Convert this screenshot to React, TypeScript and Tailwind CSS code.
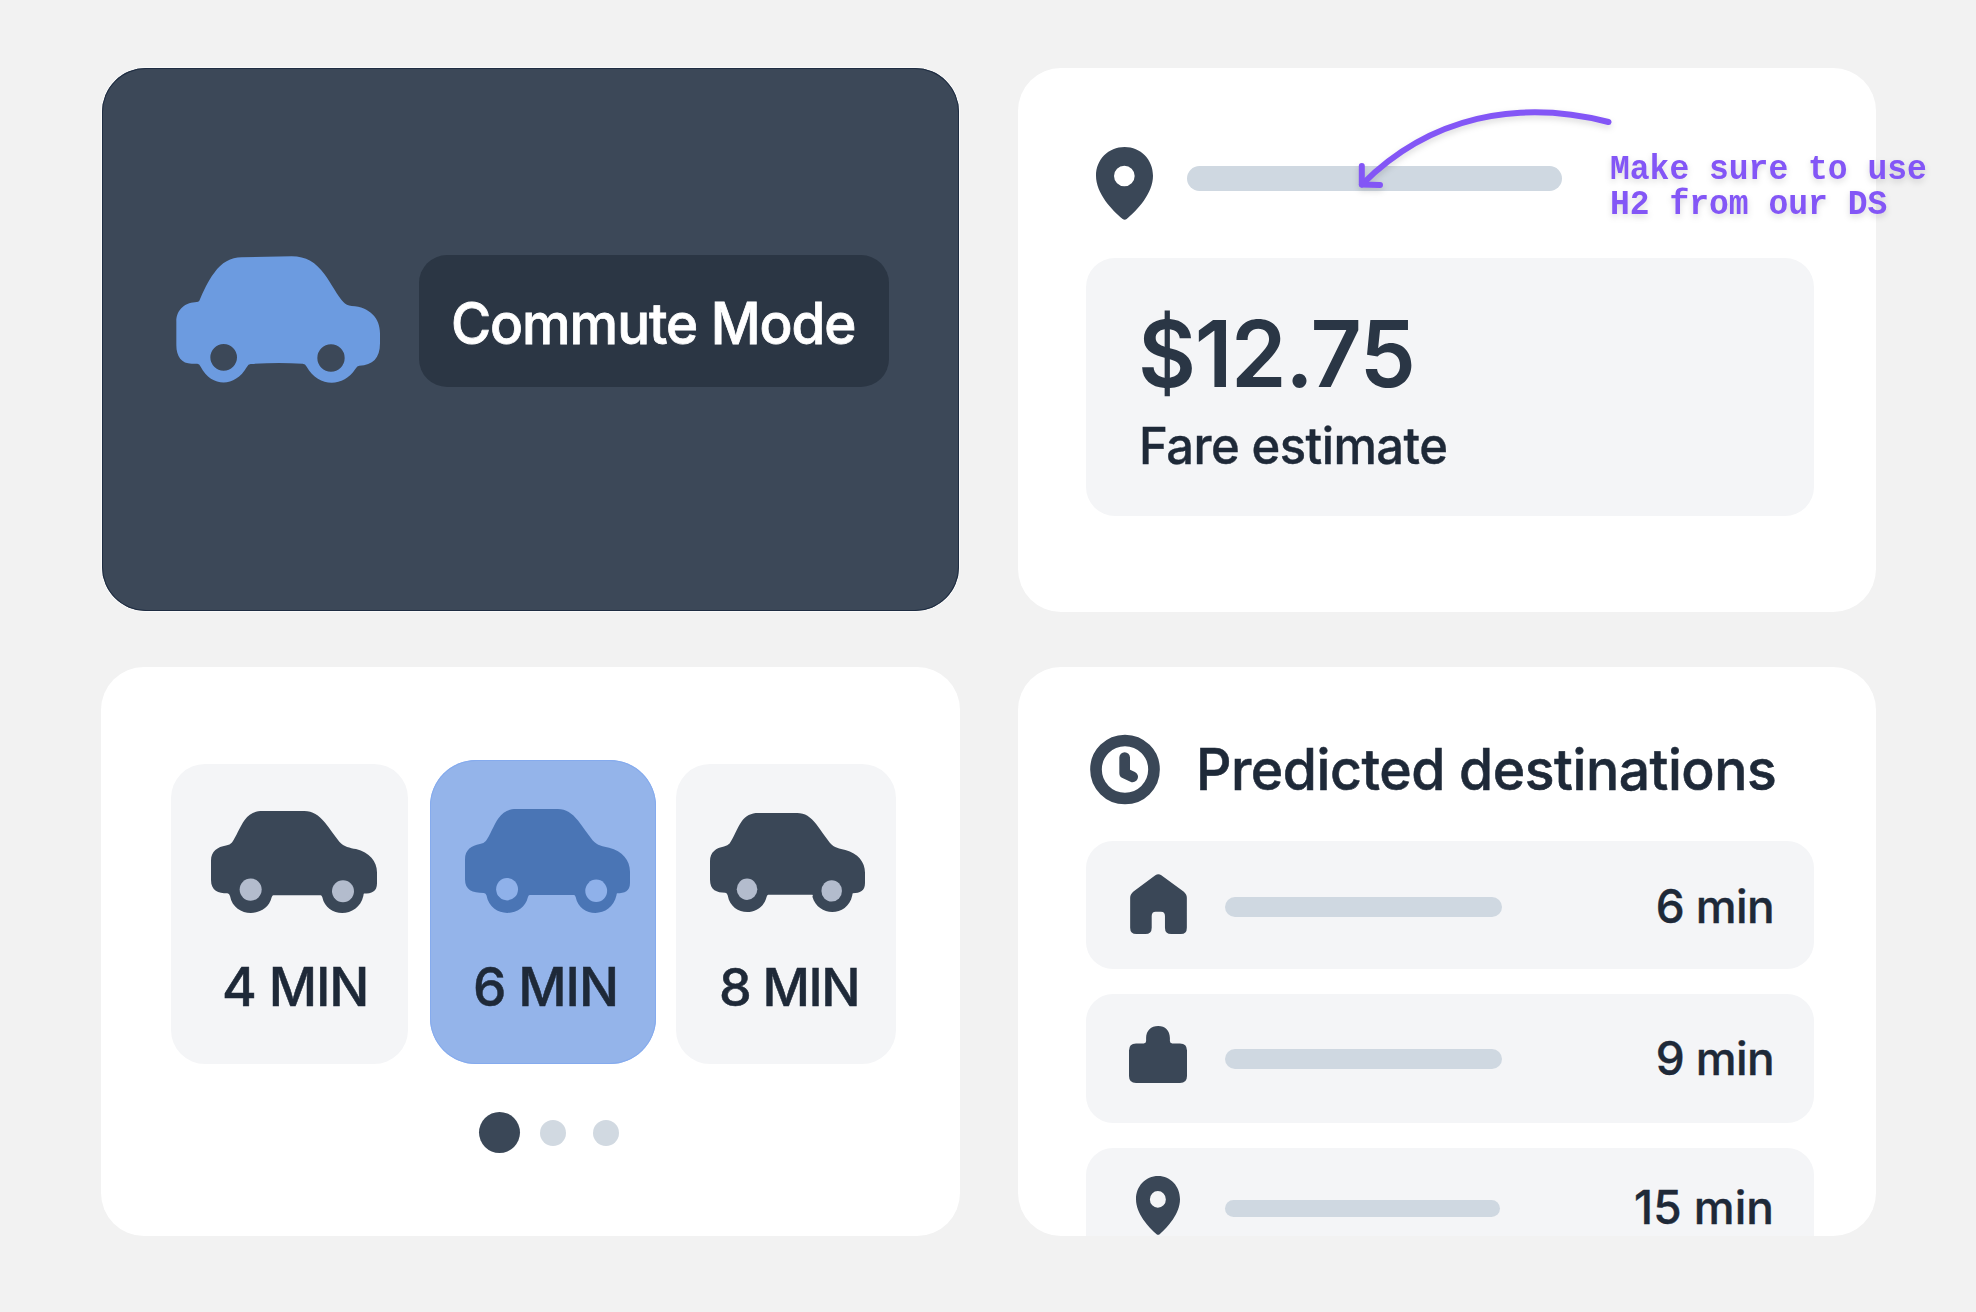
import type { ReactNode } from "react";

type CarProps = { className: string; body: string; wheel: string; left?: number; right?: number };

function Car({ className, body, wheel, left = 482, right = 758 }: CarProps) {
  return (
    <svg viewBox="363 484 498 305" preserveAspectRatio="none" className={className}>
      <path
        className={body}
        d={`M426 578C438 562 450 530 464 511C478 492 495 484 518 484L643 484C668 484 686 496 704 518C720 538 735 560 748 576C762 592 780 594 798 598C838 608 861 635 861 668L861 700C861 725 845 731 822 731Q821 731 820 738C805 805 710 805 ${right - 61} 742Q695 736 692 736L${left + 68} 736Q${left + 65} 736 ${left + 63} 742C${left + 48} 805 ${left - 50} 805 ${left - 62} 738Q${left - 64} 730 ${left - 70} 730C385 730 363 722 363 690L363 632C363 604 383 591 408 587Q420 585 426 578Z`}
      />
      <circle className={wheel} cx={left} cy="719" r="33" />
      <circle className={wheel} cx={right + 1} cy="724" r="33" />
    </svg>
  );
}

function HeroCar() {
  return (
    <svg viewBox="288 618 612 384" className="mt-px h-32 w-[204px] shrink-0">
      <path
        fillRule="evenodd"
        className="fill-[#6c9be0]"
        d="M358 752C370 724 384 692 403 668C425 638 452 622 485 622L635 619C678 619 708 638 733 672C755 702 773 738 790 756Q799 766 815 768C870 771 900 805 900 850L900 880C900 925 878 946 838 947Q832 947 826 957C790 1013 715 1013 680 950Q676 941 668 941Q590 936 512 942Q505 942 500 952C465 1013 395 1013 362 950Q358 941 352 941L335 941C305 941 289 920 289 885L289 815C289 775 320 757 350 756Q355 756 358 752ZM391 922a40 40 0 1 0 80 0a40 40 0 1 0 -80 0ZM712 924a41 41 0 1 0 82 0a41 41 0 1 0 -82 0Z"
      />
    </svg>
  );
}

function Pin({ className }: { className: string }) {
  return (
    <svg viewBox="287 291 171 219" preserveAspectRatio="none" className={className}>
      <path
        fillRule="evenodd"
        className="fill-[#3a4757]"
        d="M373 291C324 291 287 329 287 377C287 430 335 480 367 507Q373 512 379 507C411 480 458 430 458 377C458 329 421 291 373 291ZM341 378a31 31 0 1 0 62 0a31 31 0 1 0 -62 0Z"
      />
    </svg>
  );
}

function House() {
  return (
    <svg viewBox="209 520 171 181" className="h-[60px] w-[57px]">
      <path
        className="fill-[#3a4757]"
        d="M285 524Q294 518 303 524L370 573Q380 581 380 592V682Q380 701 362 701H333Q314 701 314 682V647Q314 634 302 634H286Q274 634 274 647V682Q274 701 255 701H228Q209 701 209 682V592Q209 581 219 573Z"
      />
    </svg>
  );
}

function Briefcase() {
  return (
    <svg viewBox="210 139 173 170" className="h-[57px] w-[58px]">
      <path
        className="fill-[#3a4757]"
        d="M261 184V175C261 153 276 139 297 139C318 139 332 153 332 175V184Q332 191 339 191H362Q383 191 383 212V288Q383 309 362 309H231Q210 309 210 288V212Q210 191 231 191H254Q261 191 261 184Z"
      />
    </svg>
  );
}

function Clock() {
  return (
    <svg viewBox="90 102 210 212" className="h-[71px] w-[70px]">
      <circle cx="195" cy="208" r="87" strokeWidth="35" className="fill-none stroke-[#3a4757]" />
      <path
        d="M194 172V219L218 230"
        strokeWidth="32"
        strokeLinecap="round"
        strokeLinejoin="round"
        className="fill-none stroke-[#3a4757]"
      />
    </svg>
  );
}

type RowProps = { icon: ReactNode; bar: string; time: string; timeClass: string; className: string };

function DestinationRow({ icon, bar, time, timeClass, className }: RowProps) {
  return (
    <div className={`flex shrink-0 items-center rounded-[27px] bg-[#f4f5f7] pl-[43px] pr-10 ${className}`}>
      <div className="flex w-[58px] justify-center">{icon}</div>
      <div className={`ml-[38px] rounded-full bg-[#cfd8e1] ${bar}`} />
      <span className={`ml-auto text-[46px] leading-[46px] font-medium [-webkit-text-stroke:0.4px] ${timeClass}`}>{time}</span>
    </div>
  );
}

function Annotation() {
  return (
    <div className="absolute left-[1350px] top-[100px] h-[130px] w-[600px] text-[#8356f6] drop-shadow-[0_3px_3px_rgba(0,0,0,0.14)]">
      <svg viewBox="1350 100 270 100" className="absolute left-0 top-0 h-[100px] w-[270px]">
        <g className="fill-none stroke-[#8356f6]" strokeWidth="6" strokeLinecap="round" strokeLinejoin="round">
          <path d="M1608.5 122C1519 99 1430 116 1362 184.5" />
          <path d="M1361.8 166V184.5L1380 185" />
        </g>
      </svg>
      <p className="absolute left-[260px] top-[52px] origin-top scale-y-[1.07] whitespace-pre font-['Liberation_Mono',monospace] text-[33px] leading-[33.4px] font-bold">
        {"Make sure to use\nH2 from our DS"}
      </p>
    </div>
  );
}

export default function App() {
  return (
    <main className="relative h-[1312px] w-[1976px] overflow-hidden bg-[#f2f2f2] pl-[101px] pt-[68px] font-['Inter',sans-serif] text-[#1e2938]">
      <div className="grid grid-cols-[859px_858px] grid-rows-[544px_569px] gap-x-[58px] gap-y-[55px]">
        <section className="ml-px flex h-[543px] w-[857px] items-start rounded-[44px] bg-[#3c4858] pl-[74px] pt-[187px] shadow-[inset_0_0_0_1px_#1f2d42,0_0_0_1px_#fafafa]">
          <HeroCar />
          <div className="ml-[39px] flex h-[132px] w-[470px] items-center rounded-[28px] bg-[#2b3644] pl-[32px] pt-[5px]">
            <h1 className="origin-left scale-x-[0.96] whitespace-nowrap text-[57px] leading-[57px] font-medium tracking-[-1.1px] text-white [-webkit-text-stroke:0.8px]">
              Commute Mode
            </h1>
          </div>
        </section>

        <section className="rounded-[43px] bg-white pt-[79px]">
          <div className="flex items-start pl-[78px]">
            <Pin className="h-[73px] w-[57px]" />
            <div className="ml-[34px] mt-[19px] h-[25px] w-[375px] rounded-full bg-[#cfd8e1]" />
          </div>
          <div className="ml-[68px] mt-[38px] h-[258px] w-[728px] rounded-[29px] bg-[#f4f5f7] pl-[52px] pt-[50px]">
            <p className="origin-left scale-x-[0.97] text-[92px] leading-[92px] font-semibold tracking-[-1.4px] text-[#2a3645]">
              $12.75
            </p>
            <p className="ml-px mt-[21px] origin-left scale-x-[0.97] text-[50.5px] leading-[50px] font-medium tracking-[-0.6px] [-webkit-text-stroke:0.4px]">
              Fare estimate
            </p>
          </div>
        </section>

        <section className="rounded-[43px] bg-white pt-[93px]">
          <div className="flex items-end pl-[70px]">
            <div className="h-[300px] w-[237px] rounded-[34px] bg-[#f4f5f7] pt-[47px]">
              <Car className="ml-10 h-[102px] w-[166px]" body="fill-[#3a4757]" wheel="fill-[#b3bccd]" />
              <p className="ml-[51px] mt-[48px] whitespace-nowrap text-[53px] leading-[53px] font-medium tracking-[-1.1px] [-webkit-text-stroke:0.5px]">4 MIN</p>
            </div>
            <div className="ml-[22px] h-[304px] w-[226px] rounded-[46px] bg-[#94b4ea] pt-[49px] shadow-[inset_0_0_0_1px_#85abee]">
              <Car className="ml-[35px] h-[104px] w-[165px]" body="fill-[#4a75b5]" wheel="fill-[#8fb1ea]" left={490} />
              <p className="ml-[43px] mt-[48px] whitespace-nowrap text-[53px] leading-[53px] font-medium tracking-[-1.1px] [-webkit-text-stroke:0.5px]">6 MIN</p>
            </div>
            <div className="ml-5 h-[300px] w-[220px] rounded-[34px] bg-[#f4f5f7] pt-[49px]">
              <Car className="ml-[34px] h-[99px] w-[155px]" body="fill-[#3a4757]" wheel="fill-[#b3bccd]" right={753} />
              <p className="ml-[43px] mt-[50px] whitespace-nowrap text-[52px] leading-[52px] font-medium tracking-[-1.5px] [-webkit-text-stroke:0.5px]">8 MIN</p>
            </div>
          </div>
          <div className="mt-12 flex items-center pl-[378px]">
            <span className="size-[41px] rounded-full bg-[#3a4757]" />
            <span className="ml-5 size-[26px] rounded-full bg-[#d1d9e1]" />
            <span className="ml-[27px] size-[26px] rounded-full bg-[#d1d9e1]" />
          </div>
        </section>

        <section className="flex flex-col overflow-hidden rounded-[43px] bg-white pt-[67px]">
          <div className="flex shrink-0 items-center pl-[72px]">
            <Clock />
            <h2 className="ml-9 origin-left scale-x-[0.97] whitespace-nowrap text-[57px] leading-[57px] font-medium tracking-[-0.5px] [-webkit-text-stroke:0.6px]">
              Predicted destinations
            </h2>
          </div>
          <div className="ml-[68px] mt-9 flex w-[728px] flex-col">
            <DestinationRow
              icon={<div className="-translate-y-px"><House /></div>}
              bar="h-5 w-[277px] translate-y-[2px]"
              time="6 min"
              timeClass="translate-y-px tracking-[-0.6px]"
              className="h-32"
            />
            <DestinationRow
              icon={<div className="-translate-y-1"><Briefcase /></div>}
              bar="h-5 w-[277px]"
              time="9 min"
              timeClass="-translate-y-px tracking-[-0.6px]"
              className="mt-[25px] h-[129px]"
            />
            <DestinationRow
              icon={<Pin className="h-[59px] w-[44px] -translate-y-px" />}
              bar="h-[17px] w-[275px] translate-y-[2px]"
              time="15 min"
              timeClass="translate-y-px"
              className="mt-[25px] h-[116px]"
            />
          </div>
        </section>
      </div>
      <Annotation />
    </main>
  );
}
